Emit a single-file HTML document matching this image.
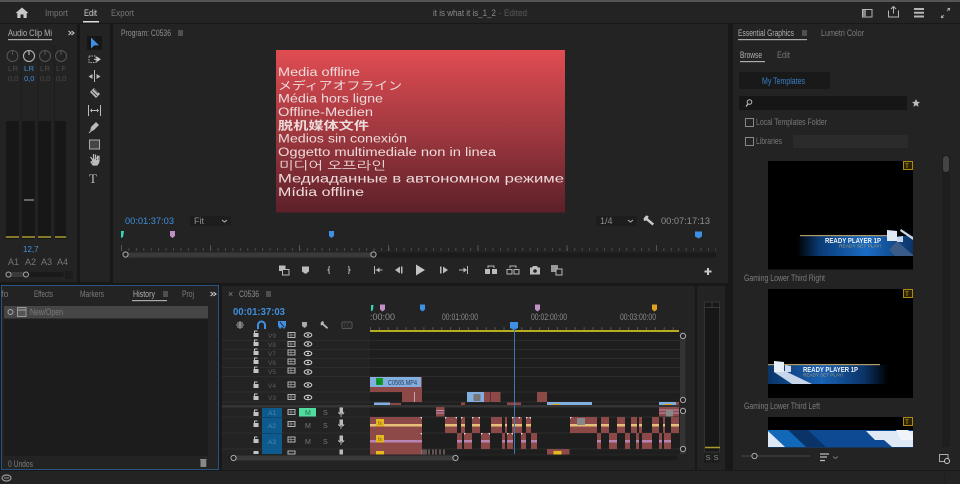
<!DOCTYPE html>
<html><head><meta charset="utf-8"><title>Premiere</title>
<style>
html,body{margin:0;padding:0;background:#181818;width:960px;height:484px;overflow:hidden}
svg{display:block;filter:blur(.3px)}
text{font-family:"Liberation Sans","Noto Sans CJK SC",sans-serif;font-size:9px;fill:#8c8c8c}
.b{fill:#3f8fdc}
.i{fill:none;stroke:#b5b5b5;stroke-width:1}
.v{font-size:11.5px;fill:#eddcdc}
</style></head><body>
<svg width="960" height="484" viewBox="0 0 960 484" xmlns="http://www.w3.org/2000/svg">
<defs>
<linearGradient id="vg" x1="0" y1="0" x2="0" y2="1"><stop offset="0" stop-color="#e04c52"/><stop offset=".5" stop-color="#a0383f"/><stop offset="1" stop-color="#5c2029"/></linearGradient>
<linearGradient id="bl" x1="0" y1="0" x2="1" y2="0"><stop offset="0" stop-color="#000"/><stop offset=".2" stop-color="#0a3c78"/><stop offset=".6" stop-color="#1a6cc4"/><stop offset="1" stop-color="#0a3468"/></linearGradient>
<linearGradient id="br" x1="0" y1="0" x2="1" y2="0"><stop offset="0" stop-color="#0a3468"/><stop offset=".45" stop-color="#1a62b4"/><stop offset=".8" stop-color="#0a3468"/><stop offset="1" stop-color="#000"/></linearGradient>
<clipPath id="a2"><rect x="370" y="417" width="52" height="16"/><rect x="445" y="417" width="12" height="16"/><rect x="461" y="417" width="4" height="16"/><rect x="472" y="417" width="8" height="16"/><rect x="491" y="417" width="11" height="16"/><rect x="505" y="417" width="2" height="16"/><rect x="512" y="417" width="10" height="16"/><rect x="526" y="417" width="5" height="16"/><rect x="570" y="417" width="27" height="16"/><rect x="601" y="417" width="8" height="16"/><rect x="617" y="417" width="8" height="16"/><rect x="631" y="417" width="6" height="16"/><rect x="639" y="417" width="3" height="16"/><rect x="652" y="417" width="7" height="16"/><rect x="663" y="417" width="2" height="16"/><rect x="671" y="417" width="8" height="16"/></clipPath>
<clipPath id="a3"><rect x="370" y="433" width="52" height="16"/><rect x="457" y="433" width="5" height="16"/><rect x="464" y="433" width="8" height="16"/><rect x="481" y="433" width="9" height="16"/><rect x="502" y="433" width="3" height="16"/><rect x="507" y="433" width="6" height="16"/><rect x="521" y="433" width="5" height="16"/><rect x="531" y="433" width="6" height="16"/><rect x="597" y="433" width="4" height="16"/><rect x="609" y="433" width="8" height="16"/><rect x="625" y="433" width="5" height="16"/><rect x="636" y="433" width="3" height="16"/><rect x="642" y="433" width="10" height="16"/><rect x="659" y="433" width="3" height="16"/><rect x="664" y="433" width="7" height="16"/></clipPath>
</defs>

<!-- app chrome -->
<rect width="960" height="484" fill="#181818"/>
<rect width="960" height="2" fill="#555"/>
<rect y="2" width="960" height="21" fill="#232323"/>
<path d="M22 7.500l-6.500 5.600h1.800V18h3.200v-3.500h3V18h3.200v-4.900h1.800z" fill="#c8c8c8"/>
<text x="45" y="16" textLength="23" lengthAdjust="spacingAndGlyphs" style="fill:#777">Import</text>
<text x="84" y="16" textLength="13" lengthAdjust="spacingAndGlyphs" style="fill:#d0d0d0">Edit</text>
<rect x="83" y="21" width="16" height="1.500" fill="#ddd"/>
<text x="111" y="16" textLength="23" lengthAdjust="spacingAndGlyphs" style="fill:#777">Export</text>
<text x="433" y="16" textLength="63" lengthAdjust="spacingAndGlyphs" style="fill:#8a8a8a">it is what it is_1_2</text>
<text x="499" y="16" textLength="28" lengthAdjust="spacingAndGlyphs" style="fill:#5a5a5a">- Edited</text>
<rect x="862.500" y="9.500" width="9.500" height="7.500" class="i"/><rect x="863" y="10" width="3" height="7" fill="#888"/>
<path d="M888.500 10.500v6.500h10v-6.500M893.500 13.500V7M891 9l2.500-2.500L896 9" class="i"/>
<path d="M914 9h10M914 12.800h10M914 16.500h10" stroke="#b5b5b5" stroke-width="2"/>
<path d="M941 18l3-3M950 8l-3 3" stroke="#999" stroke-width="1"/><path d="M941 15v3h3zM950 11V8h-3z" fill="#aaa"/>

<!-- audio clip mixer -->
<rect x="0" y="24" width="77" height="258" fill="#232323"/>
<text x="8" y="36" textLength="44" lengthAdjust="spacingAndGlyphs" style="fill:#b0b0b0">Audio Clip Mi</text>
<rect x="8" y="39" width="44" height="1.200" fill="#aaa"/>
<path d="M68.500 31l2.500 2-2.500 2M71.500 31l2.500 2-2.500 2" fill="none" stroke="#ccc" stroke-width="1.100"/>
<path d="M21 46v192M38 46v192M54.500 46v192" stroke="#1c1c1c"/>
<circle cx="12.500" cy="56" r="5.500" fill="none" stroke="#555"/><path d="M12.500 51v4" stroke="#555"/>
<circle cx="29" cy="56" r="5.500" fill="none" stroke="#bbb"/><path d="M29 51v4" stroke="#ccc"/>
<circle cx="45" cy="56" r="5.500" fill="none" stroke="#555"/><path d="M45 51v4" stroke="#555"/>
<circle cx="61" cy="56" r="5.500" fill="none" stroke="#555"/><path d="M61 51v4" stroke="#555"/>
<text x="8" y="71" style="fill:#4c4c4c;font-size:7.500px" textLength="10">L R</text>
<text x="24" y="71" class="b" style="font-size:7.500px" textLength="10">L R</text>
<text x="40" y="71" style="fill:#4c4c4c;font-size:7.500px" textLength="10">L R</text>
<text x="56" y="71" style="fill:#4c4c4c;font-size:7.500px" textLength="10">L F</text>
<text x="8" y="81" style="fill:#4c4c4c;font-size:7.500px">0,0</text>
<text x="24" y="81" class="b" style="font-size:7.500px">0,0</text>
<text x="40" y="81" style="fill:#4c4c4c;font-size:7.500px">0,0</text>
<text x="56" y="81" style="fill:#4c4c4c;font-size:7.500px">0,0</text>
<rect x="6" y="121" width="13" height="118" fill="#171717"/><rect x="22" y="121" width="13" height="118" fill="#171717"/><rect x="38" y="121" width="13" height="118" fill="#171717"/><rect x="55" y="121" width="11" height="118" fill="#171717"/>
<path d="M6 237h13M22 237h13M38 237h13M55 237h11" stroke="#a89a2c" stroke-width="1.500"/>
<rect x="24" y="199" width="10" height="2" fill="#666"/>
<text x="23" y="252" class="b" style="font-size:8px">12,7</text>
<text x="8" y="265" style="fill:#777">A1</text><text x="25" y="265" style="fill:#777">A2</text><text x="41" y="265" style="fill:#777">A3</text><text x="57" y="265" style="fill:#777">A4</text>
<rect x="8" y="272" width="56" height="5" rx="2.500" fill="#1a1a1a"/><rect x="8" y="272" width="18" height="5" fill="#3a3a3a"/>
<circle cx="8.500" cy="274.500" r="2.500" fill="#232323" stroke="#aaa"/><circle cx="26" cy="274.500" r="2.500" fill="#232323" stroke="#aaa"/>
<rect x="65" y="271" width="8" height="8" fill="#1c1c1c"/>

<!-- tools -->
<rect x="80" y="24" width="30" height="258" fill="#232323"/>
<rect x="87" y="36" width="15" height="14" fill="#161616"/>
<path d="M91 37.500v11l3-3 5-.2-8-7.800z" fill="#3f90e4"/>
<rect x="89" y="56" width="7" height="6.500" fill="none" stroke="#aaa" stroke-dasharray="1.500 1"/><path d="M94 59.300h4M97 57.300l3 2-3 2z" fill="#ccc" stroke="#ccc"/>
<path d="M94.500 70v12" stroke="#bbb"/><path d="M92.500 76.500h-2.500M96.500 76.500h2.500" stroke="#bbb"/><path d="M92.500 74v5l-4-2.500zM96.500 74v5l4-2.500z" fill="#bbb"/>
<path d="M90 92l4-4 6 6-4 4z" fill="#bdbdbd"/><path d="M92 91l5 5M94 89l4 4" stroke="#444"/>
<path d="M88.500 105v11M100.500 105v11M90.500 110.500h8" stroke="#bbb"/><path d="M92 108.500v4l-2-2zM97 108.500v4l2-2z" fill="#bbb"/>
<path d="M90 132l1-5 5-5 3 3-5 5z" fill="#bbb"/><path d="M89 133l2-2" stroke="#bbb"/>
<rect x="89.500" y="140" width="10" height="9" fill="#444" stroke="#aaa"/>
<path d="M90.500 157l3 4v-5.500M93.500 160v-6M95.500 160v-5.500M97.500 160v-4.500M99 156.500v5l-2 3.500h-4l-2-3z" stroke="#bbb" stroke-width="1.200" fill="none"/><path d="M92 160h7v3.500l-2 1.500h-4z" fill="#bbb"/>
<text x="89" y="183" style="font-family:'Liberation Serif',serif;font-size:13px;fill:#bbb">T</text>

<!-- program monitor -->
<rect x="113" y="24" width="615" height="259" fill="#232323"/>
<text x="121" y="36" textLength="50" lengthAdjust="spacingAndGlyphs" style="fill:#8e8e8e">Program: C0536</text>
<path d="M178 31h5M178 33h5M178 35h5" stroke="#999" stroke-width=".8"/>
<rect x="276" y="50" width="289" height="162.500" fill="url(#vg)"/>
<text class="v" x="278" y="76" textLength="82" lengthAdjust="spacingAndGlyphs">Media offline</text>
<text class="v" x="278" y="89.500" textLength="124" lengthAdjust="spacingAndGlyphs">メディアオフライン</text>
<text class="v" x="278" y="102.500" textLength="105" lengthAdjust="spacingAndGlyphs">Média hors ligne</text>
<text class="v" x="278" y="116" textLength="95" lengthAdjust="spacingAndGlyphs">Offline-Medien</text>
<text class="v" x="278" y="129.500" textLength="91" lengthAdjust="spacingAndGlyphs" style="font-weight:bold">脱机媒体文件</text>
<text class="v" x="278" y="142.500" textLength="129" lengthAdjust="spacingAndGlyphs">Medios sin conexión</text>
<text class="v" x="278" y="156" textLength="218" lengthAdjust="spacingAndGlyphs">Oggetto multimediale non in linea</text>
<text class="v" x="279" y="169.500" textLength="107" lengthAdjust="spacingAndGlyphs" style="font-family:'Liberation Sans','NanumGothic',sans-serif">미디어 오프라인</text>
<text class="v" x="278" y="182.500" textLength="286" lengthAdjust="spacingAndGlyphs">Медиаданные в автономном режиме</text>
<text class="v" x="278" y="196" textLength="86" lengthAdjust="spacingAndGlyphs">Mídia offline</text>

<text x="125" y="224" textLength="49" lengthAdjust="spacingAndGlyphs" class="b" style="font-size:9.500px">00:01:37:03</text>
<rect x="190" y="216" width="41" height="10" fill="#1d1d1d"/><text x="194" y="224" style="fill:#8e8e8e">Fit</text><path d="M222 220l2.500 2 2.500-2" class="i" stroke-width=".8"/>
<rect x="596" y="216" width="41" height="10" fill="#1d1d1d"/><text x="600" y="224" style="fill:#8e8e8e">1/4</text><path d="M628 220l2.500 2 2.500-2" class="i" stroke-width=".8"/>
<path d="M646 215.500l2.500.5-.5 2.500 6 5-1.500 2-6-5-2.500.5-.5-2.500z" fill="#c8c8c8"/>
<text x="661" y="224" textLength="49" lengthAdjust="spacingAndGlyphs" style="fill:#8e8e8e;font-size:9.500px">00:07:17:13</text>
<path d="M121 231h3l-1 6-2 1z" fill="#35d4b4"/>
<path d="M170 231h5v5l-2.500 2-2.500-2z" fill="#c08fc4"/>
<path d="M329 231h5v5l-2.500 2-2.500-2z" fill="#3f90e4"/>
<path d="M695 231.500h7v5l-3.500 2-3.500-2z" fill="#3f90e4"/>
<path d="M121 249.500H716" stroke="#4a4a4a" stroke-width="3" stroke-dasharray="1 6.430"/>
<path d="M121.500 245v6M210.500 245v6M299.500 245v6M388.500 245v6M478 245v6M567 245v6M656.500 245v6" stroke="#555"/>
<rect x="121" y="252.500" width="595" height="5" rx="2.500" fill="#1b1b1b"/><rect x="125" y="252.500" width="248" height="5" fill="#3a3a3a"/>
<circle cx="125.500" cy="254.500" r="2.600" fill="#232323" stroke="#aaa"/><circle cx="373.500" cy="254.500" r="2.600" fill="#232323" stroke="#aaa"/>
<!-- transport -->
<rect x="279" y="265.500" width="6.500" height="5.500" fill="#bbb"/><rect x="282.500" y="269.500" width="6.500" height="5.500" fill="#232323" stroke="#bbb"/>
<path d="M302 266.500h7v5l-3.500 2.500-3.500-2.500z" fill="#bbb"/>
<path d="M330 266.500c-1.500 0-1 1-1 3l-1 .5 1 .5c0 2-.500 3 1 3M348 266.500c1.500 0 1 1 1 3l1 .5-1 .5c0 2 .5 3-1 3" class="i"/>
<path d="M374.500 266v8M375.500 270h7" class="i"/><path d="M376 270l3.500-2.500v5z" fill="#bbb"/>
<path d="M395 270l5-3.500v7zM401 266.500h1.500v7H401z" fill="#bbb"/>
<path d="M416 264.500v11l9-5.500z" fill="#c4c4c4"/>
<path d="M440 266.500h1.500v7H440zM443 266.500l5 3.500-5 3.500z" fill="#bbb"/>
<path d="M459 270h7M467.500 266v8" class="i"/><path d="M467 270l-3.500-2.500v5z" fill="#bbb"/>
<path d="M485 269h5v5h-5zM492 269h5v5h-5z" fill="#bbb"/><path d="M488 268v-2h6v2" class="i"/>
<path d="M507 269.500h5v4.500h-5zM514 269.500h5v4.500h-5z" class="i"/><path d="M510 268v-2h6v2" class="i"/>
<path d="M530 267.500h2l1-1.500h4l1 1.500h2v7h-10z" fill="#bbb"/><circle cx="535" cy="271" r="1.800" fill="#232323"/>
<rect x="551" y="265" width="7" height="7" fill="#999"/><rect x="556" y="269" width="6" height="6" fill="#232323" stroke="#bbb"/>
<path d="M708 268v7M704.500 271.500h7" stroke="#c8c8c8" stroke-width="2"/>

<!-- history panel -->
<rect x="1.500" y="285.500" width="217" height="184" fill="#232323" stroke="#2a5480"/>
<text x="1" y="297" style="fill:#777">fo</text>
<text x="34" y="297" textLength="19" lengthAdjust="spacingAndGlyphs" style="fill:#7c7c7c">Effects</text>
<text x="80" y="297" textLength="24" lengthAdjust="spacingAndGlyphs" style="fill:#7c7c7c">Markers</text>
<text x="133" y="297" textLength="22" lengthAdjust="spacingAndGlyphs" style="fill:#b0b0b0">History</text>
<path d="M163 292h5M163 294h5M163 296h5" stroke="#999" stroke-width=".8"/>
<rect x="132" y="300" width="35" height="1.200" fill="#aaa"/>
<text x="182" y="297" textLength="12" lengthAdjust="spacingAndGlyphs" style="fill:#7c7c7c">Proj</text>
<path d="M210.500 292l2.500 2-2.500 2M213.500 292l2.500 2-2.500 2" fill="none" stroke="#ccc" stroke-width="1.100"/>
<rect x="4" y="306" width="204" height="150" fill="#1c1c1c"/>
<rect x="4" y="306" width="204" height="12.500" fill="#464646"/>
<circle cx="10.500" cy="312" r="2.500" fill="none" stroke="#aaa"/>
<rect x="17.500" y="307.500" width="8.500" height="9" fill="#555" stroke="#999"/><path d="M18 310h8" stroke="#aaa"/>
<text x="30" y="315" textLength="33" lengthAdjust="spacingAndGlyphs" style="fill:#7c7c7c">New/Open</text>
<text x="8" y="467" textLength="25" lengthAdjust="spacingAndGlyphs" style="fill:#7c7c7c">0 Undos</text>
<path d="M200 459.500h6.500M201 460.500h4.800v6h-4.800z" stroke="#888" fill="#888"/>

<!-- timeline panel -->
<rect x="222" y="286" width="473" height="184" fill="#232323"/>
<text x="228" y="297" style="fill:#888">×</text>
<text x="239" y="297" textLength="20" lengthAdjust="spacingAndGlyphs" style="fill:#8e8e8e">C0536</text>
<path d="M266 292h5M266 294h5M266 296h5" stroke="#999" stroke-width=".8"/>
<text x="233" y="315" textLength="52" lengthAdjust="spacingAndGlyphs" class="b" style="font-size:10.500px;font-weight:bold">00:01:37:03</text>
<!-- timeline toolbar -->
<path d="M236 325h8M240 321v8M237 323h6M237 327h6" stroke="#aaa"/>
<path d="M258 329v-4a3.500 3.500 0 0 1 7 0v4" fill="none" stroke="#3f90e4" stroke-width="2"/>
<path d="M278 321h8v5l-2 3-2-2-2 2-2-3z" fill="#3f90e4"/><path d="M280 322l4 5" stroke="#232323"/>
<path d="M302 322h5v4l-2.500 2-2.500-2z" fill="#aaa"/>
<path d="M322 321l2 1-.5 1.500 4.500 4-1 1.500-4.500-4-1.500.5-.5-2z" fill="#bbb"/>
<rect x="342" y="322" width="10" height="6.500" rx="1" fill="none" stroke="#555"/><text x="343.500" y="327.500" style="font-size:5px;fill:#555">CC</text>
<!-- track header/rows -->
<rect x="370" y="332" width="310" height="122" fill="#1e1e1e"/>
<path d="M222 340.500h458M222 349.500h458M222 358.500h458M222 367.500h458M222 376.500h458M222 392h458M222 402h458M222 417h458M222 433h458M222 449h458" stroke="#2c2c2c"/>
<rect x="222" y="405" width="458" height="2.500" fill="#343434"/>
<path d="M253.500 333h5v4h-5zM253.500 342h5v4h-5zM253.500 351h5v4h-5zM253.500 360h5v4h-5zM253.500 369h5v4h-5zM253.500 384h5v4h-5zM253.500 396h5v4h-5zM253.500 412h5v4h-5zM253.500 423h5v4h-5zM253.500 439h5v4h-5zM253.500 451h5v3h-5z" fill="#c4c4c4"/>
<path d="M254.500 333v-2h3M254.500 342v-2h3M254.500 351v-2h3M254.500 360v-2h3M254.500 369v-2h3M254.500 384v-2h3M254.500 396v-2h3M254.500 412v-2h3M254.500 423v-2h3M254.500 439v-2h3" stroke="#c4c4c4" fill="none"/>
<path d="M288 332.500h7v5h-7zM288 341.500h7v5h-7zM288 350h7v5h-7zM288 359h7v5h-7zM288 368h7v5h-7zM288 382h7v5h-7zM288 394.500h7v5h-7zM288 409.500h7v5h-7zM288 421.500h7v5h-7zM288 437h7v5h-7zM288 451h7v3h-7z" class="i" stroke-width=".9"/>
<path d="M291 332.500v5M291 341.500v5M291 350v5M291 359v5M291 368v5M291 382v5M291 394.500v5M291 409.500v5M291 421.500v5M291 437v5M288 335h7M288 344h7M288 352.500h7M288 361.500h7M288 370.500h7M288 384.500h7M288 397h7M288 412h7M288 424h7M288 439.500h7" stroke="#999" stroke-width=".7"/>
<g fill="none" stroke="#d0d0d0" stroke-width="1.100"><ellipse cx="308" cy="335" rx="3.800" ry="2.200"/><ellipse cx="308" cy="344" rx="3.800" ry="2.200"/><ellipse cx="308" cy="353.500" rx="3.800" ry="2.200"/><ellipse cx="308" cy="362.500" rx="3.800" ry="2.200"/><ellipse cx="308" cy="372" rx="3.800" ry="2.200"/><ellipse cx="308" cy="385" rx="3.800" ry="2.200"/><ellipse cx="308" cy="397.500" rx="3.800" ry="2.200"/></g>
<g fill="#d0d0d0"><circle cx="308" cy="335" r="1"/><circle cx="308" cy="344" r="1"/><circle cx="308" cy="353.500" r="1"/><circle cx="308" cy="362.500" r="1"/><circle cx="308" cy="372" r="1"/><circle cx="308" cy="385" r="1"/><circle cx="308" cy="397.500" r="1"/></g>
<text x="268" y="338" style="font-size:6.500px;fill:#5c5c5c">V9</text><text x="268" y="347" style="font-size:6.500px;fill:#5c5c5c">V8</text><text x="268" y="356" style="font-size:6.500px;fill:#5c5c5c">V7</text><text x="268" y="365" style="font-size:6.500px;fill:#5c5c5c">V6</text><text x="268" y="374" style="font-size:6.500px;fill:#5c5c5c">V5</text><text x="268" y="388" style="font-size:6.500px;fill:#5c5c5c">V4</text><text x="268" y="400" style="font-size:6.500px;fill:#5c5c5c">V3</text>
<rect x="262" y="408" width="20" height="46" fill="#0f5a8c"/>
<path d="M262 417.500h20M262 433.500h20" stroke="#0a4870"/>
<text x="268" y="415" style="font-size:6.500px;fill:#3f8fc4">A1</text><text x="268" y="428" style="font-size:6.500px;fill:#3f8fc4">A2</text><text x="268" y="444" style="font-size:6.500px;fill:#3f8fc4">A3</text>
<rect x="299" y="408" width="17" height="8.500" fill="#4fdc9c"/>
<text x="305" y="415" style="font-size:7px;fill:#1f6e4c">M</text><text x="323" y="415" style="font-size:7px;fill:#777">S</text>
<text x="305" y="428" style="font-size:7px;fill:#777">M</text><text x="323" y="428" style="font-size:7px;fill:#777">S</text>
<text x="305" y="444" style="font-size:7px;fill:#777">M</text><text x="323" y="444" style="font-size:7px;fill:#777">S</text>
<path d="M340 408h2.500v5h-2.500zM340 420h2.500v5h-2.500zM340 436h2.500v5h-2.500zM340 450h2.500v4h-2.500z" fill="#bbb" stroke="#bbb"/><path d="M338.500 412a2.800 2.800 0 0 0 5.500 0M341 415v2M338.500 424a2.800 2.800 0 0 0 5.500 0M341 427v2M338.500 440a2.800 2.800 0 0 0 5.500 0M341 443v2" fill="none" stroke="#bbb" stroke-width=".8"/>
<!-- ruler -->
<text x="370" y="320" style="fill:#8e8e8e">:00:00</text>
<text x="442" y="320" textLength="36" lengthAdjust="spacingAndGlyphs" style="fill:#8e8e8e">00:01:00:00</text>
<text x="531" y="320" textLength="36" lengthAdjust="spacingAndGlyphs" style="fill:#8e8e8e">00:02:00:00</text>
<text x="620" y="320" textLength="36" lengthAdjust="spacingAndGlyphs" style="fill:#8e8e8e">00:03:00:00</text>
<path d="M371 305h2.500l-.5 5-2 1.500z" fill="#35d4b4"/>
<path d="M380 304.500h5v5l-2.500 2-2.500-2z" fill="#c08fc4"/>
<path d="M420 304.500h5v5l-2.500 2-2.500-2z" fill="#3f90e4"/>
<path d="M535 304.500h5v5l-2.500 2-2.500-2z" fill="#c08fc4"/>
<path d="M652 304.500h5v5l-2.500 2-2.500-2z" fill="#e0a020"/>
<path d="M370 328.500h310" stroke="#5a5a5a" stroke-width="2.500" stroke-dasharray="1 7.900"/>
<path d="M370 331h309" stroke="#e8dc20" stroke-width="1.600"/>
<!-- clips -->
<rect x="370" y="377" width="52" height="15" fill="#8d4848"/>
<rect x="370" y="377" width="51" height="10" fill="#83aee0"/>
<rect x="376" y="378" width="7" height="7" fill="#149a24"/><text x="377" y="384" style="font-size:5px;fill:#063">fx</text>
<text x="388" y="385" textLength="29" lengthAdjust="spacingAndGlyphs" style="font-size:7.500px;fill:#2a3a55">C0565.MP4</text>
<rect x="402" y="392" width="20" height="10" fill="#8d4848"/><path d="M414.500 392v10" stroke="#c9a0a0"/>
<rect x="374" y="403" width="27" height="2" fill="#8d4848"/><rect x="374" y="402.500" width="16" height="2.500" fill="#83aee0"/>
<rect x="467" y="392" width="17" height="10" fill="#83aee0"/><rect x="473.500" y="394" width="7" height="7" fill="#777"/>
<rect x="484" y="392" width="6.500" height="10" fill="#8d4848"/><rect x="491" y="392" width="9.500" height="10" fill="#8d4848"/>
<rect x="537" y="392" width="10" height="10" fill="#8d4848"/>
<rect x="461" y="402.500" width="4" height="2.500" fill="#8d4848"/><rect x="507" y="402.500" width="14" height="2.500" fill="#8d4848"/>
<rect x="547" y="402" width="45" height="3" fill="#83aee0"/><rect x="552" y="404" width="8" height="1" fill="#d4a820"/>
<rect x="659" y="402" width="17" height="3" fill="#83aee0"/><rect x="676" y="402" width="3" height="3" fill="#8d4848"/><rect x="664" y="404" width="8" height="1" fill="#d4a820"/>
<rect x="436" y="407" width="8.500" height="9.500" fill="#8d4848"/><path d="M436 410.500h8.500M436 413h8.500" stroke="#b890b8"/>
<rect x="659" y="407" width="20" height="9.500" fill="#8d4848"/><path d="M659 410h20M659 413h20" stroke="#b890b8"/><rect x="666" y="410" width="7" height="6.500" fill="#888"/>
<g clip-path="url(#a2)"><rect x="370" y="417" width="310" height="16" fill="#8d4848"/><rect x="370" y="424" width="310" height="2.500" fill="#e6c07a"/></g>
<g clip-path="url(#a3)"><rect x="370" y="433" width="310" height="16" fill="#8d4848"/><rect x="370" y="440" width="310" height="2.500" fill="#b884b4"/></g>
<rect x="376" y="419" width="8" height="7.500" fill="#e6b820"/><rect x="376" y="435" width="8" height="7.500" fill="#e6b820"/>
<text x="378" y="425" style="font-size:5px;fill:#7a5a10">fx</text><text x="378" y="441" style="font-size:5px;fill:#7a5a10">fx</text>
<rect x="577" y="418" width="8" height="7" fill="#888"/>
<path d="M420 417h2v2zM420 433h2v2zM445 417h2l-2 2zM455 417h2v2zM461 417h2l-2 2zM472 417h2l-2 2zM478 417h2v2zM512 417h2l-2 2zM518 417h2v2zM526 417h2l-2 2zM529 417h2v2zM570 417h2l-2 2zM481 433h2l-2 2zM488 433h2v2zM464 433h2l-2 2zM507 433h2l-2 2zM511 433h2v2zM521 433h2l-2 2z" fill="#e0e0e0"/>
<rect x="370" y="449" width="52" height="5.500" fill="#8d4848"/><rect x="376" y="451" width="8" height="3.500" fill="#e6b820"/>
<path d="M422 449.500v5M424 449.500v5M426 449.500v5M429 449.500v5M433 449.500v5M436 449.500v5M440 449.500v5M444 449.500v5" stroke="#a88" stroke-width="1"/>
<rect x="547" y="449" width="22.500" height="5.500" fill="#8d4848"/><rect x="553.500" y="451" width="8" height="3.500" fill="#e6b820"/>
<path d="M514 322h-4v6l4 2 4-2v-6z" fill="#3f90e4"/>
<path d="M514.500 328v126" stroke="#3a78b8"/>
<!-- timeline scrollbars -->
<rect x="680" y="332" width="5.500" height="122" fill="#333"/>
<rect x="680" y="402" width="5.500" height="5" fill="#232323"/>
<circle cx="683" cy="336" r="2.600" fill="#232323" stroke="#aaa"/><circle cx="683" cy="400" r="2.600" fill="#232323" stroke="#aaa"/><circle cx="683" cy="411" r="2.600" fill="#232323" stroke="#aaa"/><circle cx="683" cy="449" r="2.600" fill="#232323" stroke="#aaa"/>
<rect x="228" y="455.500" width="450" height="5" rx="2.500" fill="#1b1b1b"/><rect x="233" y="455.500" width="222" height="5" fill="#3a3a3a"/>
<circle cx="233.500" cy="458" r="2.600" fill="#232323" stroke="#aaa"/><circle cx="455.500" cy="458" r="2.600" fill="#232323" stroke="#aaa"/>

<!-- master meter -->
<rect x="697" y="286" width="28" height="184" fill="#232323"/>
<rect x="704.500" y="302" width="15" height="150" fill="#171717" stroke="#333"/>
<path d="M705 307.500h15M712 302.500v5" stroke="#3a3a3a"/>
<path d="M705 447.500h15" stroke="#a89a2c" stroke-width="1.500"/>
<rect x="704" y="453" width="7" height="10" fill="#1d1d1d"/><rect x="712" y="453" width="7" height="10" fill="#1d1d1d"/>
<text x="705.500" y="460" style="font-size:7.500px;fill:#888">S</text><text x="713.500" y="460" style="font-size:7.500px;fill:#888">S</text>

<!-- essential graphics -->
<rect x="733" y="24" width="227" height="446" fill="#232323"/>
<text x="738" y="36" textLength="56" lengthAdjust="spacingAndGlyphs" style="fill:#b0b0b0">Essential Graphics</text>
<path d="M802 31h5M802 33h5M802 35h5" stroke="#999" stroke-width=".8"/>
<rect x="738" y="39" width="69" height="1.200" fill="#aaa"/>
<text x="821" y="36" textLength="43" lengthAdjust="spacingAndGlyphs" style="fill:#7c7c7c">Lumetri Color</text>
<text x="740" y="58" textLength="22" lengthAdjust="spacingAndGlyphs" style="fill:#b0b0b0">Browse</text>
<rect x="740" y="61" width="25" height="1.200" fill="#aaa"/>
<text x="777" y="58" textLength="13" lengthAdjust="spacingAndGlyphs" style="fill:#777">Edit</text>
<rect x="739" y="72" width="91" height="17" fill="#191919"/>
<text x="762" y="84" textLength="43" lengthAdjust="spacingAndGlyphs" style="fill:#3a7fc8">My Templates</text>
<rect x="739" y="96" width="168" height="14" fill="#161616"/>
<circle cx="749.500" cy="102" r="2.300" fill="none" stroke="#bbb"/><path d="M748 104l-2 2.500" stroke="#bbb" stroke-width="1.300"/>
<path d="M916 99l1.200 2.700 2.800.3-2.100 1.900.6 2.900-2.500-1.500-2.500 1.500.6-2.900-2.100-1.900 2.800-.3z" fill="#bbb"/>
<rect x="745.500" y="118.500" width="8" height="8" fill="none" stroke="#888"/>
<text x="756" y="125" textLength="71" lengthAdjust="spacingAndGlyphs" style="fill:#777">Local Templates Folder</text>
<rect x="745.500" y="137.500" width="8" height="8" fill="none" stroke="#888"/>
<text x="756" y="144" textLength="26" lengthAdjust="spacingAndGlyphs" style="fill:#777">Libraries</text>
<rect x="793" y="135" width="115" height="13" fill="#2b2b2b"/>
<rect x="942" y="155" width="8" height="292" fill="#1e1e1e"/><rect x="943" y="156" width="6" height="16" rx="3" fill="#444"/>
<!-- thumb1 -->
<rect x="768" y="161" width="145" height="108.500" fill="#000"/>
<rect x="797" y="236" width="116" height="20" fill="url(#bl)"/>
<rect x="800" y="235" width="90" height="1.200" fill="#b09a68"/>
<text x="825" y="243" textLength="56" lengthAdjust="spacingAndGlyphs" style="font-size:7px;font-weight:bold;fill:#f2f2f2">READY PLAYER 1P</text>
<text x="839" y="247.500" textLength="42" lengthAdjust="spacingAndGlyphs" style="font-size:4.500px;fill:#b09a68">READY SET PLAY!</text>
<path d="M889 250l8-9 16 14v1h-18z" fill="#3a5a88"/>
<path d="M887 230l10 1v10h-10z" fill="#dfe8f5"/><path d="M897 237l6-1 0 6-6 0z" fill="#c8d6ea"/><path d="M901 229l12 8v3l-13-9z" fill="#c8d6ea"/>
<!-- thumb2 -->
<rect x="768" y="289" width="145" height="109" fill="#000"/>
<rect x="768" y="365" width="120" height="19" fill="url(#br)"/>
<rect x="768" y="364" width="112" height="1.200" fill="#b09a68"/>
<text x="803" y="372" textLength="55" lengthAdjust="spacingAndGlyphs" style="font-size:7px;font-weight:bold;fill:#f2f2f2">READY PLAYER 1P</text>
<text x="803" y="376.500" textLength="40" lengthAdjust="spacingAndGlyphs" style="font-size:4.500px;fill:#b09a68">READY SET PLAY!</text>
<path d="M774 372l11-1 27 13h-20z" fill="#c8d6ea"/><path d="M774 361l10 1v10h-10z" fill="#e6eef8"/><path d="M785 365l6 1v6h-6z" fill="#d0dcee"/>
<!-- thumb3 -->
<rect x="768" y="417" width="145" height="30.500" fill="#000"/>
<rect x="768" y="430" width="145" height="17.500" fill="#0e4a94"/>
<path d="M768 447h45l-20-17h-25z" fill="#1268b8"/><path d="M788 430l18 17h20l-18-17z" fill="#0a3468"/>
<path d="M768 431l17 16h-17z" fill="#dfe8f5"/><path d="M866 431h47v16h-21l-8-7h-9z" fill="#dfe8f5"/><path d="M896 430h12l5 5v5h-12z" fill="#f0f4fa"/>
<!-- badges -->
<g fill="#2a2200" stroke="#b08a18"><rect x="903.500" y="161.500" width="9" height="8"/><rect x="903.500" y="289.500" width="9" height="8"/><rect x="903.500" y="417.500" width="9" height="8"/></g>
<text x="905" y="168" style="font-size:6.500px;fill:#d8ae24">T</text><text x="905" y="296" style="font-size:6.500px;fill:#d8ae24">T</text><text x="905" y="424" style="font-size:6.500px;fill:#d8ae24">T</text>
<text x="744" y="281" textLength="81" lengthAdjust="spacingAndGlyphs" style="fill:#7c7c7c">Gaming Lower Third Right</text>
<text x="744" y="409" textLength="76" lengthAdjust="spacingAndGlyphs" style="fill:#7c7c7c">Gaming Lower Third Left</text>
<!-- bottom tools -->
<path d="M741 456h69" stroke="#4a4a4a"/><circle cx="754.500" cy="456" r="2.600" fill="#232323" stroke="#aaa"/>
<path d="M820 454h9M820 457h7M820 460.500h5" stroke="#bbb" stroke-width="1.300"/><path d="M833 456.500l2.500 2 2.500-2" fill="none" stroke="#777"/>
<rect x="939.500" y="454.500" width="8.500" height="7" fill="none" stroke="#aaa"/><circle cx="947" cy="461" r="2.500" fill="#232323" stroke="#ccc"/>

<!-- status bar -->
<rect y="471" width="960" height="13" fill="#232323"/>
<ellipse cx="6.500" cy="478" rx="4.500" ry="3" fill="none" stroke="#999" stroke-width="1.200"/><path d="M4 478h5" stroke="#999"/>
<path d="M944.500 471v13" stroke="#1e1e1e"/>
</svg>
</body></html>
